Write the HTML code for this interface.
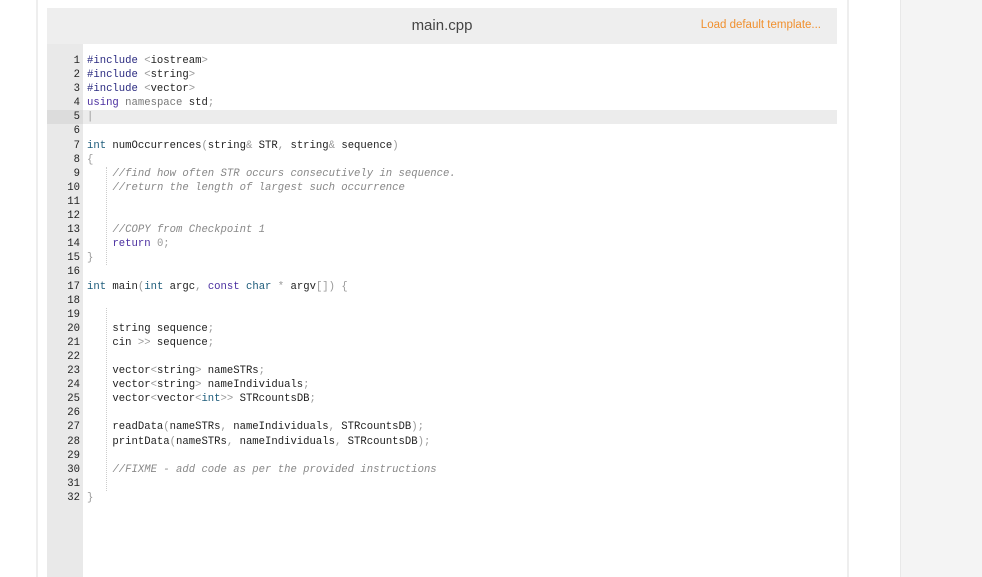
<!DOCTYPE html>
<html><head><meta charset="utf-8"><style>
body{margin:0;width:982px;height:577px;background:#fff;position:relative;overflow:hidden;font-family:"Liberation Sans",sans-serif}
.lshadow{position:absolute;left:36px;top:0;width:2px;height:577px;background:#eee}
.rshadow{position:absolute;left:847px;top:0;width:2px;height:577px;background:#eee}
.side{position:absolute;left:900px;top:0;width:82px;height:577px;background:#f4f4f4;border-left:1px solid #e8e8e8}
.hdr{position:absolute;left:47px;top:8px;width:790px;height:36px;background:#eee}
.title{position:absolute;left:0;width:790px;top:9px;text-align:center;font-size:15px;color:#444}
.load{position:absolute;right:16px;top:11px;font-size:11.5px;color:#f0902e}
.gut{position:absolute;left:47px;top:44px;width:36px;height:533px;background:#e9e9e9}
.hl{position:absolute;left:47px;top:110px;width:790px;height:14px;background:#ececec}
.hlg{position:absolute;left:47px;top:110px;width:36px;height:14px;background:#dcdcdc}
.code{position:absolute;left:47px;top:54px;font-family:"Liberation Mono",monospace;font-size:10.6px;line-height:14.1px;color:#222;white-space:pre}
.ln{display:inline-block;width:33px;text-align:right;color:#222;margin-right:7px}
.k{color:#1c5b7a}.b{color:#4a2fa0}.n{color:#2a2a80}.p{color:#999}.c{color:#888;font-style:italic}
.guide{position:absolute;left:106px;width:0;border-left:1px dotted #ccc}
</style></head><body>
<div class="lshadow"></div><div class="rshadow"></div><div class="side"></div>
<div class="hdr"><div class="title">main.cpp</div><div class="load">Load default template...</div></div>
<div class="gut"></div><div class="hl"></div><div class="hlg"></div>
<div class="guide" style="top:167px;height:98px"></div>
<div class="guide" style="top:308px;height:183px"></div>
<div class="code"><span class="ln">1</span><span class="n">#include</span> <span class="p">&lt;</span>iostream<span class="p">&gt;</span>
<span class="ln">2</span><span class="n">#include</span> <span class="p">&lt;</span>string<span class="p">&gt;</span>
<span class="ln">3</span><span class="n">#include</span> <span class="p">&lt;</span>vector<span class="p">&gt;</span>
<span class="ln">4</span><span class="b">using</span> <span class="k" style="color:#777">namespace</span> std<span class="p">;</span>
<span class="ln">5</span><span class="p">|</span>
<span class="ln">6</span>
<span class="ln">7</span><span class="k">int</span> numOccurrences<span class="p">(</span>string<span class="p">&amp;</span> STR<span class="p">,</span> string<span class="p">&amp;</span> sequence<span class="p">)</span>
<span class="ln">8</span><span class="p">{</span>
<span class="ln">9</span>    <span class="c">//find how often STR occurs consecutively in sequence.</span>
<span class="ln">10</span>    <span class="c">//return the length of largest such occurrence</span>
<span class="ln">11</span>
<span class="ln">12</span>
<span class="ln">13</span>    <span class="c">//COPY from Checkpoint 1</span>
<span class="ln">14</span>    <span class="b">return</span> <span class="p">0;</span>
<span class="ln">15</span><span class="p">}</span>
<span class="ln">16</span>
<span class="ln">17</span><span class="k">int</span> main<span class="p">(</span><span class="k">int</span> argc<span class="p">,</span> <span class="b">const</span> <span class="k">char</span> <span class="p">*</span> argv<span class="p">[]) {</span>
<span class="ln">18</span>
<span class="ln">19</span>
<span class="ln">20</span>    string sequence<span class="p">;</span>
<span class="ln">21</span>    cin <span class="p">&gt;&gt;</span> sequence<span class="p">;</span>
<span class="ln">22</span>
<span class="ln">23</span>    vector<span class="p">&lt;</span>string<span class="p">&gt;</span> nameSTRs<span class="p">;</span>
<span class="ln">24</span>    vector<span class="p">&lt;</span>string<span class="p">&gt;</span> nameIndividuals<span class="p">;</span>
<span class="ln">25</span>    vector<span class="p">&lt;</span>vector<span class="p">&lt;</span><span class="k">int</span><span class="p">&gt;&gt;</span> STRcountsDB<span class="p">;</span>
<span class="ln">26</span>
<span class="ln">27</span>    readData<span class="p">(</span>nameSTRs<span class="p">,</span> nameIndividuals<span class="p">,</span> STRcountsDB<span class="p">);</span>
<span class="ln">28</span>    printData<span class="p">(</span>nameSTRs<span class="p">,</span> nameIndividuals<span class="p">,</span> STRcountsDB<span class="p">);</span>
<span class="ln">29</span>
<span class="ln">30</span>    <span class="c">//FIXME - add code as per the provided instructions</span>
<span class="ln">31</span>
<span class="ln">32</span><span class="p">}</span></div>
</body></html>
